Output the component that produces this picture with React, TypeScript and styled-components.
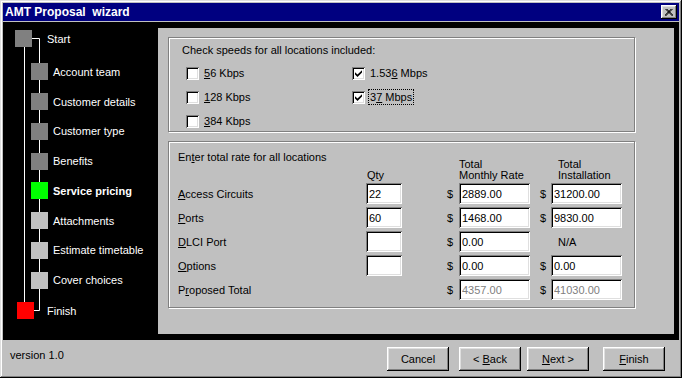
import { FC, ReactNode } from 'react'
import styled, { createGlobalStyle } from 'styled-components'

const GlobalStyle = createGlobalStyle`
  html, body {
    margin: 0;
    padding: 0;
    background: #c0c0c0;
  }
  body {
    font-family: 'Liberation Sans', Arial, sans-serif;
    font-size: 11px;
    color: #000;
  }
  * {
    box-sizing: border-box;
  }
`

type Step = { label: string; color: string; active?: boolean }

const steps: Step[] = [
  { label: 'Account team', color: '#808080' },
  { label: 'Customer details', color: '#808080' },
  { label: 'Customer type', color: '#808080' },
  { label: 'Benefits', color: '#808080' },
  { label: 'Service pricing', color: '#00ff00', active: true },
  { label: 'Attachments', color: '#c0c0c0' },
  { label: 'Estimate timetable', color: '#c0c0c0' },
  { label: 'Cover choices', color: '#c0c0c0' }
]

type Rate = { label: ReactNode; qty?: string; monthly: string; install?: string; total?: boolean }

const rates: Rate[] = [
  { label: <><Key>A</Key>ccess Circuits</>, qty: '22', monthly: '2889.00', install: '31200.00' },
  { label: <><Key>P</Key>orts</>, qty: '60', monthly: '1468.00', install: '9830.00' },
  { label: <><Key>D</Key>LCI Port</>, qty: '', monthly: '0.00' },
  { label: <><Key>O</Key>ptions</>, qty: '', monthly: '0.00', install: '0.00' },
  { label: <>P<Key>r</Key>oposed Total</>, monthly: '4357.00', install: '41030.00', total: true }
]

const Check: FC = () => (
  <svg width="7" height="7" viewBox="0 0 7 7">
    <polygon points="0,2.3 2.5,4.6 7,0.2 7,2.6 2.5,7 0,4.6" fill="#000" />
  </svg>
)

const SpeedOption: FC<{ checked?: boolean; focused?: boolean; children: ReactNode }> = ({
  checked,
  focused,
  children
}) => (
  <Option>
    <CheckBox>{checked && <Check />}</CheckBox>
    <OptionLabel $focused={focused}>{children}</OptionLabel>
  </Option>
)

const App: FC = () => {
  return (
    <>
      <GlobalStyle />
      <Window>
        <TitleBar>
          <Title>AMT Proposal  wizard</Title>
          <CloseButton aria-label="Close">
            <svg width="8" height="7" viewBox="0 0 8 7">
              <path d="M0.5 0 L7.5 7 M1.7 0 L8.7 7 M7.5 0 L0.5 7 M6.3 0 L-0.7 7" stroke="#000" strokeWidth="1" />
            </svg>
          </CloseButton>
        </TitleBar>

        <Body>
          <Sidebar>
            {/* tree connectors */}
            <Connectors width="155" height="318">
              <path d="M21.5 25 V280" stroke="#fff" fill="none" />
              <path d="M29 16.5 H36.5 V288.5 H31" stroke="#fff" fill="none" />
            </Connectors>
            <EndRow>
              <Square $color="#808080" $indent={12} />
              <StepLabel $gap={15}>Start</StepLabel>
            </EndRow>
            <StepList>
              {steps.map(s => (
                <StepRow key={s.label}>
                  <Square $color={s.color} $indent={28} />
                  <StepLabel $gap={5} $bold={s.active}>
                    {s.label}
                  </StepLabel>
                </StepRow>
              ))}
            </StepList>
            <EndRow>
              <Square $color="#ff0000" $indent={14} />
              <StepLabel $gap={13}>Finish</StepLabel>
            </EndRow>
          </Sidebar>

          <Panel>
            <SpeedGroup>
              <GroupHeading>Check speeds for all locations included:</GroupHeading>
              <SpeedGrid>
                <SpeedOption>
                  <Key>5</Key>6 Kbps
                </SpeedOption>
                <SpeedOption checked>
                  1.53<Key>6</Key> Mbps
                </SpeedOption>
                <SpeedOption>
                  <Key>1</Key>28 Kbps
                </SpeedOption>
                <SpeedOption checked focused>
                  3<Key>7</Key> Mbps
                </SpeedOption>
                <SpeedOption>
                  <Key>3</Key>84 Kbps
                </SpeedOption>
              </SpeedGrid>
            </SpeedGroup>

            <RateGroup>
              <RateGrid>
                <RateTitle>
                  En<Key>t</Key>er total rate for all locations
                </RateTitle>
                <ColHead $pad={1}>Qty</ColHead>
                <span />
                <ColHead $pad={-1}>
                  Total
                  <br />
                  Monthly Rate
                </ColHead>
                <span />
                <ColHead $pad={7}>
                  Total
                  <br />
                  Installation
                </ColHead>

                {rates.map((r, i) => (
                  <RateRow key={i}>
                    <RowLabel>{r.label}</RowLabel>
                    {r.total ? <span /> : <Field value={r.qty} readOnly />}
                    <Dollar $pad={6}>$</Dollar>
                    <Field value={r.monthly} readOnly $dim={r.total} />
                    {r.install !== undefined ? (
                      <>
                        <Dollar $pad={5}>$</Dollar>
                        <Field value={r.install} readOnly $dim={r.total} />
                      </>
                    ) : (
                      <>
                        <span />
                        <NotApplicable>N/A</NotApplicable>
                      </>
                    )}
                  </RateRow>
                ))}
              </RateGrid>
            </RateGroup>
          </Panel>
        </Body>

        <Footer>
          <Version>version 1.0</Version>
          <Button $gap={0}>Cancel</Button>
          <Button $gap={10}>
            &lt; <Key>B</Key>ack
          </Button>
          <Button $gap={6}>
            <Key>N</Key>ext &gt;
          </Button>
          <Button $gap={14}>
            <Key>F</Key>inish
          </Button>
        </Footer>
      </Window>
    </>
  )
}

export default App

function Key({ children }: { children: ReactNode }) {
  return <Underline>{children}</Underline>
}

const Underline = styled.span`
  text-decoration: underline;
  text-underline-offset: 1px;
`

const Window = styled.div`
  width: 682px;
  height: 378px;
  padding: 3px;
  display: flex;
  flex-direction: column;
  background: #c0c0c0;
  box-shadow: inset -1px -1px #000, inset 1px 1px #dfdfdf, inset -2px -2px #808080, inset 2px 2px #fff;
`

const TitleBar = styled.div`
  height: 18px;
  display: flex;
  align-items: center;
  justify-content: space-between;
  padding: 0 2px 0 2px;
  background: #000080;
  color: #fff;
`

const Title = styled.span`
  font-weight: bold;
  font-size: 12px;
  white-space: pre;
`

const CloseButton = styled.button`
  width: 16px;
  height: 14px;
  padding: 0;
  border: none;
  display: flex;
  align-items: center;
  justify-content: center;
  background: #c0c0c0;
  box-shadow: inset -1px -1px #000, inset 1px 1px #fff, inset -2px -2px #808080, inset 2px 2px #dfdfdf;
`

const Body = styled.div`
  height: 318px;
  margin-top: 1px;
  display: flex;
  background: #000;
`

const Sidebar = styled.div`
  position: relative;
  width: 155px;
  padding-top: 8px;
  display: flex;
  flex-direction: column;
  color: #fff;
`

const Connectors = styled.svg`
  position: absolute;
  left: 0;
  top: 0;
`

const StepList = styled.div`
  display: flex;
  flex-direction: column;
  margin: 10px 0 7px;
`

const StepRow = styled.div`
  position: relative;
  height: 29.75px;
  display: flex;
  align-items: center;
`

const EndRow = styled(StepRow)`
  height: 17px;
`

const Square = styled.span<{ $color: string; $indent: number }>`
  width: 17px;
  height: 17px;
  margin-left: ${p => p.$indent}px;
  background: ${p => p.$color};
  flex: none;
`

const StepLabel = styled.span<{ $gap: number; $bold?: boolean }>`
  margin-left: ${p => p.$gap}px;
  font-weight: ${p => (p.$bold ? 'bold' : 'normal')};
  white-space: nowrap;
`

const Panel = styled.div`
  flex: 1;
  margin: 6px 5px 6px 0;
  padding: 9px 0 0 10px;
  display: flex;
  flex-direction: column;
  gap: 9px;
  background: #c0c0c0;
`

const Group = styled.div`
  width: 467px;
  border: 1px solid #808080;
  box-shadow: 1px 1px 0 #fff, inset 1px 1px 0 #fff;
`

const SpeedGroup = styled(Group)`
  height: 95px;
  padding: 5px 0 0 13px;
`

const GroupHeading = styled.div`
  line-height: 14px;
`

const SpeedGrid = styled.div`
  display: grid;
  grid-template-columns: 166px auto;
  grid-auto-rows: 20px;
  row-gap: 4px;
  margin: 6px 0 0 4px;
`

const Option = styled.label`
  display: flex;
  align-items: center;
  gap: 4px;
`

const CheckBox = styled.span`
  width: 13px;
  height: 13px;
  display: inline-flex;
  align-items: center;
  justify-content: center;
  background: #fff;
  box-shadow: inset 1px 1px #808080, inset -1px -1px #fff, inset 2px 2px #000, inset -2px -2px #dfdfdf;
`

const OptionLabel = styled.span<{ $focused?: boolean }>`
  line-height: 14px;
  padding: 0 1px;
  outline: ${p => (p.$focused ? '1px dotted #000' : 'none')};
`

const RateGroup = styled(Group)`
  padding: 8px 0 7px 9px;
`

const RateGrid = styled.div`
  display: grid;
  grid-template-columns: 188px 36px 57px 71px 21px 71px;
  grid-template-rows: 30px;
  grid-auto-rows: 21px;
  row-gap: 3px;
  align-items: center;
`

const RateTitle = styled.div`
  align-self: start;
  line-height: 14px;
  white-space: nowrap;
`

const ColHead = styled.div<{ $pad: number }>`
  align-self: end;
  line-height: 10.5px;
  padding-left: ${p => p.$pad}px;
  white-space: nowrap;
`

const RateRow = styled.div`
  display: contents;
`

const RowLabel = styled.span`
  white-space: nowrap;
`

const Dollar = styled.span<{ $pad: number }>`
  text-align: right;
  padding-right: ${p => p.$pad}px;
`

const NotApplicable = styled.span`
  padding-left: 7px;
`

const Field = styled.input<{ $dim?: boolean }>`
  width: 100%;
  height: 21px;
  border: none;
  outline: none;
  padding: 0 0 0 3px;
  background: #fff;
  color: ${p => (p.$dim ? '#808080' : '#000')};
  font: 11px 'Liberation Sans', Arial, sans-serif;
  box-shadow: inset 1px 1px #808080, inset -1px -1px #fff, inset 2px 2px #000, inset -2px -2px #dfdfdf;
`

const Footer = styled.div`
  flex: 1;
  display: flex;
  align-items: flex-start;
  padding: 7px 14px 0 7px;
`

const Version = styled.span`
  flex: 1;
  line-height: 16px;
`

const Button = styled.button<{ $gap: number }>`
  width: 62px;
  height: 24px;
  margin-left: ${p => p.$gap}px;
  padding: 0;
  border: none;
  background: #c0c0c0;
  color: #000;
  font: 11px 'Liberation Sans', Arial, sans-serif;
  box-shadow: inset -1px -1px #000, inset 1px 1px #fff, inset -2px -2px #808080, inset 2px 2px #dfdfdf;
`
